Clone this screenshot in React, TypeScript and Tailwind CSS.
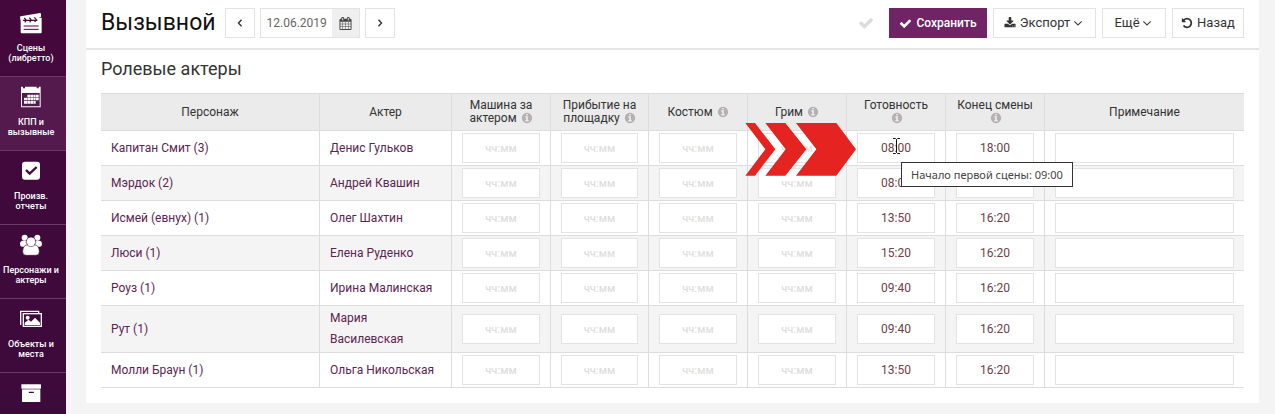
import { useState } from "react";
import type { ReactNode } from "react";

interface Scene {
  id: number;
  name: string;
  count: number;
  actor: string;
  ready: string;
  end: string;
}

interface Column {
  id: string;
  title: string;
  width: string;
  info?: boolean;
}

const COLUMNS: Column[] = [
  { id: "character", title: "Персонаж", width: "w-[219px]" },
  { id: "actor", title: "Актер", width: "w-[132px]" },
  { id: "car", title: "Машина за актером", width: "w-[99px]", info: true },
  { id: "arrival", title: "Прибытие на площадку", width: "w-[98px]", info: true },
  { id: "costume", title: "Костюм", width: "w-[99px]", info: true },
  { id: "makeup", title: "Грим", width: "w-[99px]", info: true },
  { id: "ready", title: "Готовность", width: "w-[99px]", info: true },
  { id: "end", title: "Конец смены", width: "w-[99px]", info: true },
  { id: "note", title: "Примечание", width: "w-auto" },
];

const ROWS: Scene[] = [
  { id: 1, name: "Капитан Смит", count: 3, actor: "Денис Гульков", ready: "08:00", end: "18:00" },
  { id: 2, name: "Мэрдок", count: 2, actor: "Андрей Квашин", ready: "08:00", end: "16:20" },
  { id: 3, name: "Исмей (евнух)", count: 1, actor: "Олег Шахтин", ready: "13:50", end: "16:20" },
  { id: 4, name: "Люси", count: 1, actor: "Елена Руденко", ready: "15:20", end: "16:20" },
  { id: 5, name: "Роуз", count: 1, actor: "Ирина Малинская", ready: "09:40", end: "16:20" },
  { id: 6, name: "Рут", count: 1, actor: "Мария Василевская", ready: "09:40", end: "16:20" },
  { id: 7, name: "Молли Браун", count: 1, actor: "Ольга Никольская", ready: "13:50", end: "16:20" },
];

const PATHS = {
  check: "M1671 566q0 40-28 68l-724 724-136 136q-28 28-68 28t-68-28l-136-136-362-362q-28-28-28-68t28-68l136-136q28-28 68-28t68 28l294 295 656-657q28-28 68-28t68 28l136 136q28 28 28 68z",
  calendar: "M192 1664h288v-288h-288v288zm352 0h320v-288h-320v288zm-352-352h288v-320h-288v320zm352 0h320v-320h-320v320zm-352-384h288v-288h-288v288zm736 736h320v-288h-320v288zm-384-736h320v-288h-320v288zm768 736h288v-288h-288v288zm-384-352h320v-320h-320v320zm-352-864v-288q0-13-9.5-22.5t-22.5-9.5h-64q-13 0-22.5 9.5t-9.5 22.5v288q0 13 9.5 22.5t22.5 9.5h64q13 0 22.5-9.5t9.5-22.5zm736 864h288v-320h-288v320zm-384-384h320v-288h-320v288zm384 0h288v-288h-288v288zm32-480v-288q0-13-9.5-22.5t-22.5-9.5h-64q-13 0-22.5 9.5t-9.5 22.5v288q0 13 9.5 22.5t22.5 9.5h64q13 0 22.5-9.5t9.5-22.5zm384-64v1280q0 52-38 90t-90 38h-1408q-52 0-90-38t-38-90v-1280q0-52 38-90t90-38h128v-96q0-66 47-113t113-47h64q66 0 113 47t47 113v96h384v-96q0-66 47-113t113-47h64q66 0 113 47t47 113v96h128q52 0 90 38t38 90z",
  undo: "M1664 896q0 156-61 298t-164 245-245 164-298 61q-172 0-327-72.5t-264-204.5q-7-10-6.5-22.5t8.5-20.5l137-138q10-9 25-9 16 2 23 12 73 95 179 147t225 52q104 0 198.5-40.5t163.5-109.5 109.5-163.5 40.5-198.5-40.5-198.5-109.5-163.5-163.5-109.5-198.5-40.5q-98 0-188 35.5t-160 101.5l137 138q31 30 14 69-17 40-59 40h-448q-26 0-45-19t-19-45v-448q0-42 40-59 39-17 69 14l130 129q107-101 244.5-156.5t284.5-55.5q156 0 298 61t245 164 164 245 61 298z",
  download: "M1344 1344q0-26-19-45t-45-19-45 19-19 45 19 45 45 19 45-19 19-45zm256 0q0-26-19-45t-45-19-45 19-19 45 19 45 45 19 45-19 19-45zm128-224v320q0 40-28 68t-68 28h-1472q-40 0-68-28t-28-68v-320q0-40 28-68t68-28h465l135 136q58 56 136 56t136-56l136-136h464q40 0 68 28t28 68zm-325-569q17 41-14 70l-448 448q-18 19-45 19t-45-19l-448-448q-31-29-14-70 17-39 59-39h256v-448q0-26 19-45t45-19h256q26 0 45 19t19 45v448h256q42 0 59 39z",
  info: "M1152 1376v-160q0-14-9-23t-23-9h-96v-512q0-14-9-23t-23-9h-320q-14 0-23 9t-9 23v160q0 14 9 23t23 9h96v320h-96q-14 0-23 9t-9 23v160q0 14 9 23t23 9h448q14 0 23-9t9-23zm-128-896v-160q0-14-9-23t-23-9h-192q-14 0-23 9t-9 23v160q0 14 9 23t23 9h192q14 0 23-9t9-23zm640 416q0 209-103 385.5t-279.5 279.5-385.5 103-385.5-103-279.5-279.5-103-385.5 103-385.5 279.5-279.5 385.5-103 385.5 103 279.5 279.5 103 385.5z",
  angleDown: "M1395 736q0 13-10 23l-466 466q-10 10-23 10t-23-10l-466-466q-10-10-10-23t10-23l50-50q10-10 23-10t23 10l393 393 393-393q10-10 23-10t23 10l50 50q10 10 10 23z",
};

function Icon({ name, className }: { name: keyof typeof PATHS; className?: string }) {
  return (
    <svg viewBox="0 0 1792 1792" fill="currentColor" className={className} aria-hidden="true">
      <path d={PATHS[name]} />
    </svg>
  );
}

function Angle({ dir }: { dir: "left" | "right" }) {
  return (
    <svg viewBox="0 0 6 8" className="h-2 w-[6px]" fill="none" stroke="currentColor" strokeWidth="1.4" aria-hidden="true">
      <path d={dir === "left" ? "M4.5 .8 1.5 4l3 3.2" : "M1.5 .8l3 3.2-3 3.2"} />
    </svg>
  );
}

// Menu icons share one 66x64 grid, shown at 22px
const MENU: { label?: string; icon: ReactNode; active?: boolean }[] = [
  {
    label: "Сцены (либретто)",
    icon: (
      <>
        <path d="M0 14Q0 12 2 11.500L60 2Q63 2 63 5V13L56 16H65V60Q65 63 62 63H5Q2 63 2 60V27Z" fill="#fff" />
        <path d="M9 24H52M13 17l6 7-5 6M28 16l6 7-5 7M43 15l6 7-5 7" stroke="#45083d" strokeWidth="3.500" fill="none" />
        <path d="M11 41H56M11 51H56" stroke="#45083d" strokeWidth="3" />
      </>
    ),
  },
  {
    label: "КПП и вызывные",
    active: true,
    icon: (
      <>
        <path d="M3 1H9V6H15V1H50V6H56V1H62V63H3ZM6 20V60H59V20Z" fill="#fff" fillRule="evenodd" />
        <path d="M22 25h8v8h-8zM31 25h8v8h-8zM40 25h7v8h-7zM48 25h8v8h-8zM12 34h9v8h-9zM22 34h8v8h-8zM31 34h8v8h-8zM40 34h7v8h-7zM48 34h8v8h-8zM12 44h9v8h-9zM22 44h8v8h-8zM31 44h8v8h-8zM40 44h7v8h-7z" fill="#fff" />
      </>
    ),
  },
  {
    label: "Произв. отчеты",
    icon: (
      <>
        <rect x="6" y="4" width="54" height="54" rx="9" fill="#fff" />
        <path d="M18 29 29 40 50 20" stroke="#45083d" strokeWidth="7" fill="none" />
      </>
    ),
  },
  {
    label: "Персонажи и актеры",
    icon: (
      <>
        <g fill="#fff">
          <circle cx="14" cy="10" r="9" />
          <circle cx="52" cy="10" r="9" />
          <path d="M0 29Q0 20 8 19H22V37H6Q0 37 0 29ZM66 29Q66 20 58 19H44V37H60Q66 37 66 29Z" />
        </g>
        <path
          d="M33 8a14 14 0 0 1 11 23Q58 34 58 52Q58 63 48 63H18Q8 63 8 52Q8 34 22 31A14 14 0 0 1 33 8Z"
          fill="#fff"
          stroke="#40093c"
          strokeWidth="2"
        />
        <path d="M21 32Q33 42 45 32" fill="none" stroke="#40093c" strokeWidth="1.500" />
      </>
    ),
  },
  {
    label: "Объекты и места",
    icon: (
      <>
        <path d="M2 50V9H56V14M2 9V45" fill="none" stroke="#fff" strokeWidth="4" />
        <rect x="10" y="16" width="54" height="38" fill="none" stroke="#fff" strokeWidth="4" />
        <circle cx="23" cy="28" r="6" fill="#fff" />
        <path d="M14 50V43L26 34 33 40 45 28 60 43V50Z" fill="#fff" />
      </>
    ),
  },
  {
    icon: (
      <>
        <rect x="4" y="6" width="59" height="13" rx="1" fill="#fff" />
        <path d="M6 21H61V59H6Z" fill="#fff" />
        <path d="M28 30H40" stroke="#3c0a3b" strokeWidth="4" strokeLinecap="round" />
      </>
    ),
  },
];

function Sidebar() {
  return (
    <nav className="w-[66px] shrink-0 overflow-hidden bg-linear-to-b from-[#45083d] to-[#3c0a3b] pt-[3px]">
      {MENU.map((item, i) => (
        <a
          key={i}
          href="#"
          className={
            "flex h-[74px] flex-col items-center border-b border-[#6a3a66] pt-[9px] pr-1 text-center text-[9px] leading-[10px] font-medium text-white " +
            (item.active ? "bg-[#54194d]" : "")
          }
        >
          <svg viewBox="0 0 66 64" className="mb-[9px] h-[22px] w-[22px] shrink-0" aria-hidden="true">
            {item.icon}
          </svg>
          {item.label && <span>{item.label}</span>}
        </a>
      ))}
    </nav>
  );
}

function ToolButton({ children, className = "" }: { children: ReactNode; className?: string }) {
  return (
    <button
      type="button"
      className={"flex h-[30px] items-center justify-center border border-[#e3e3e3] bg-white text-[13px] text-[#333] " + className}
    >
      {children}
    </button>
  );
}

function Toolbar() {
  const [date, setDate] = useState("12.06.2019");

  return (
    <header className="flex items-center border-b-2 border-[#e5e5e5] px-[15px] pt-2 pb-[10px]">
      <h1 id="page-title" className="mr-[9px] text-[23px] leading-[30px] text-[#111]">Вызывной</h1>
      <div className="flex gap-[5px]">
        <ToolButton className="w-[30px]"><Angle dir="left" /></ToolButton>
        <div className="flex h-[30px] w-[100px] border border-[#e3e3e3]">
          <input
            type="text"
            aria-labelledby="page-title"
            value={date}
            onChange={(e) => setDate(e.target.value)}
            className="w-[71px] min-w-0 pl-[6px] text-xs text-[#666] outline-none"
          />
          <button type="button" className="flex flex-1 items-center justify-center bg-[#efefef] text-[#444]">
            <Icon name="calendar" className="h-[13px] w-[13px]" />
          </button>
        </div>
        <ToolButton className="w-[30px]"><Angle dir="right" /></ToolButton>
      </div>
      <div className="ml-auto flex items-center gap-[6px]">
        <Icon name="check" className="mr-[9px] h-4 w-4 text-[#dcdcdc]" />
        <button type="button" className="flex h-[30px] w-[98px] items-center justify-center gap-1 bg-[#702465] text-xs font-medium text-white">
          <Icon name="check" className="h-[13px] w-[13px]" />
          Сохранить
        </button>
        <ToolButton className="w-[103px]">
          <Icon name="download" className="mr-1 h-3 w-3" />
          <span>Экспорт</span>
          <Icon name="angleDown" className="ml-px h-[14px] w-[14px]" />
        </ToolButton>
        <ToolButton className="w-16">
          Ещё
          <Icon name="angleDown" className="h-[14px] w-[14px]" />
        </ToolButton>
        <ToolButton className="w-[72px] gap-1">
          <Icon name="undo" className="h-3 w-3" />
          Назад
        </ToolButton>
      </div>
    </header>
  );
}

function Cell({ row, col, value = "", children }: { row: Scene; col: string; value?: string; children?: ReactNode }) {
  return (
    <td className="border-r border-b border-[#ddd] px-[10px] py-[2px] last:border-r-0">
      <div className="relative">
        <input
          type="text"
          aria-labelledby={`row-${row.id} col-${col}`}
          defaultValue={value}
          placeholder={col === "note" ? undefined : "чч:мм"}
          className="block h-[30px] w-full min-w-0 border border-[#e3e3e3] bg-white px-1 text-center text-xs text-[#704048] outline-none placeholder:text-[11px] placeholder:font-medium placeholder:text-[#dfdfdf]"
        />
        {children}
      </div>
    </td>
  );
}

function Pointer() {
  return (
    <svg viewBox="15 114 333 159" className="absolute -top-[10px] -left-[112px] z-10 h-[53px] w-[111px] max-w-none" fill="#e52421" aria-hidden="true">
      <path d="M16 114H45L106 193 45 272H16L76 193Z" />
      <path d="M76 114H136L199 193 136 272H76L137 193Z" />
      <path d="M168 114H289L348 193 289 272H168L229 193Z" />
    </svg>
  );
}

function TextCursor() {
  return (
    <svg viewBox="0 0 7 16" className="absolute top-[5px] left-9 z-10 h-4 w-[7px]" fill="none" stroke="#111" aria-hidden="true">
      <path d="M0 .5H2.500L3.500 1.500 4.500 .5H7M3.500 1.500V14.500M0 15.500H2.500L3.500 14.500 4.500 15.500H7" />
    </svg>
  );
}

function CallSheet() {
  return (
    <table className="w-full table-fixed border-separate border-spacing-0 text-xs text-[#5c2450]">
      <thead>
        <tr className="h-[38px] bg-[#ebebeb] text-[#333]">
          {COLUMNS.map((c) => (
            <th
              key={c.id}
              id={`col-${c.id}`}
              className={`${c.width} border-t border-r border-b border-[#ddd] px-[10px] leading-[13px] font-normal last:border-r-0`}
            >
              {c.title}
              {c.info && (
                <>
                  {" "}
                  <Icon name="info" className="ml-px inline h-3 w-3 align-[-2px] text-[#b5b0b3]" />
                </>
              )}
            </th>
          ))}
        </tr>
      </thead>
      <tbody>
        {ROWS.map((row, i) => (
          <tr key={row.id} className="even:bg-[#f4f4f4]">
            <td id={`row-${row.id}`} className="border-r border-b border-[#ddd] px-[10px]">
              <a href="#">{row.name} ({row.count})</a>
            </td>
            <td className="border-r border-b border-[#ddd] px-[10px] py-[2px] leading-[21px]">
              <a href="#">{row.actor}</a>
            </td>
            <Cell row={row} col="car" />
            <Cell row={row} col="arrival" />
            <Cell row={row} col="costume" />
            <Cell row={row} col="makeup" />
            <Cell row={row} col="ready" value={row.ready}>
              {i === 0 && (
                <>
                  <Pointer />
                  <TextCursor />
                  <div
                    role="tooltip"
                    className="absolute top-[29px] left-11 z-20 border border-[#333] bg-white px-[9px] font-['Noto_Sans',sans-serif] text-[11px] leading-[23px] whitespace-nowrap text-[#444]"
                  >
                    Начало первой сцены: 09:00
                  </div>
                </>
              )}
            </Cell>
            <Cell row={row} col="end" value={row.end} />
            <Cell row={row} col="note" />
          </tr>
        ))}
      </tbody>
    </table>
  );
}

export default function App() {
  return (
    <div className="flex h-screen overflow-hidden bg-[#f4f4f4] font-[Roboto,sans-serif]">
      <Sidebar />
      <main className="mr-4 ml-5 min-w-0 flex-1 self-start bg-white">
        <Toolbar />
        <section className="px-[15px] pt-[7px] pb-[15px]">
          <h2 className="mb-[13px] text-lg leading-[23px] text-[#333]">Ролевые актеры</h2>
          <CallSheet />
        </section>
      </main>
    </div>
  );
}
